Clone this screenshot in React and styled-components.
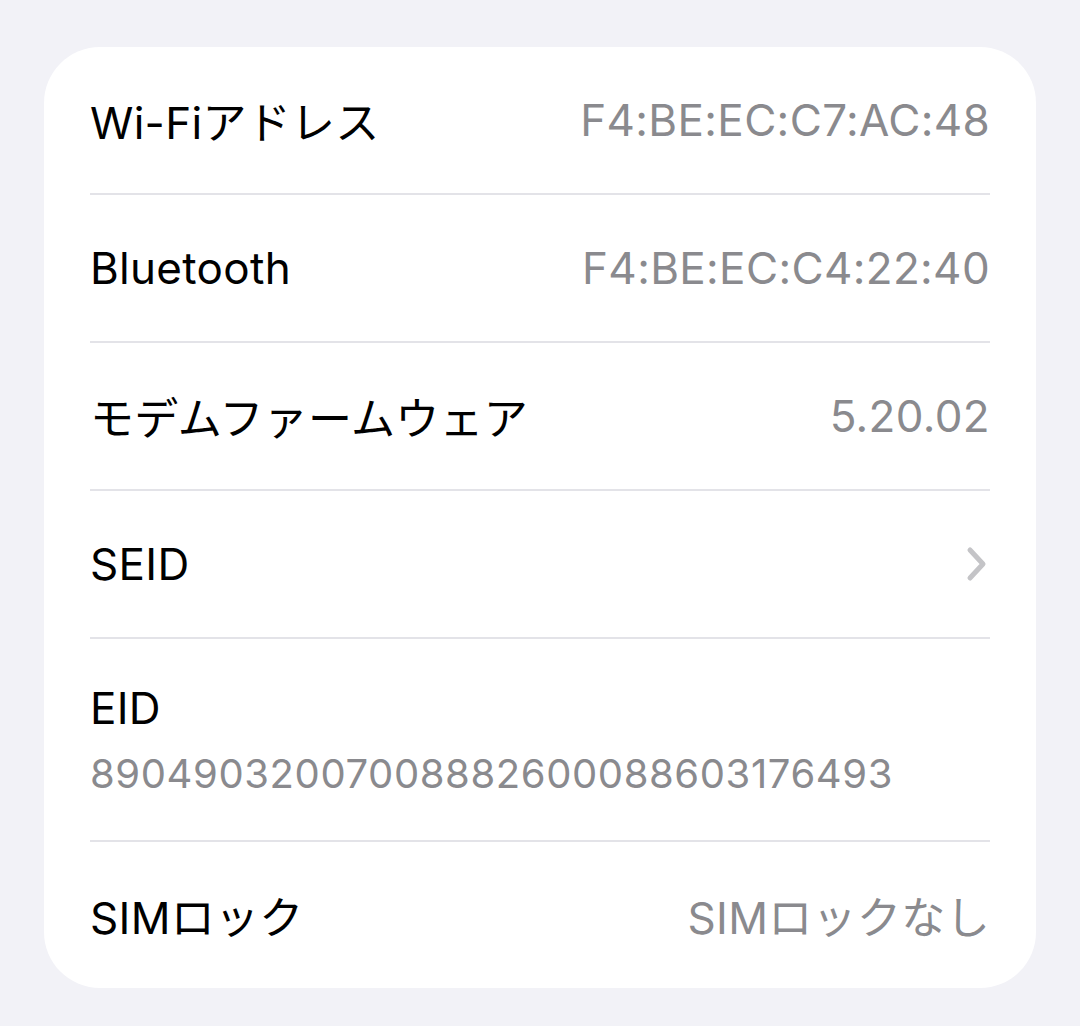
import React from 'react'
import styled, { createGlobalStyle } from 'styled-components'

const GlobalStyle = createGlobalStyle`
    html, body { margin:0; padding:0; background:#f2f2f7; }
    body { font-family: Inter, "Noto Sans CJK JP", sans-serif; -webkit-font-smoothing:antialiased; }
`

const Page = styled.div`
    width:1080px;
    height:1026px;
    box-sizing:border-box;
    padding:47px 44px 0 44px;
`

const Card = styled.div`
    background:#fff;
    border-radius:56px;
    padding:0 46px;
    display:flex;
    flex-direction:column;
`

const Row = styled.div`
    display:flex;
    height:${p => p.$tall ? 201 : 146}px;
    border-bottom:${p => p.$last ? 'none' : '2px solid #e3e3e8'};
    flex-direction:${p => p.$stacked ? 'column' : 'row'};
    align-items:${p => p.$stacked ? 'flex-start' : 'center'};
    justify-content:${p => p.$stacked ? 'center' : 'space-between'};
`

const Label = styled.span`
    font-size:44px;
    color:#000;
    letter-spacing:0.3px;
`

const Value = styled.span`
    font-size:44px;
    color:#8a8a8e;
    letter-spacing:0.35px;
`

const SubValue = styled.span`
    font-size:40px;
    color:#8a8a8e;
    margin-top:14px;
    letter-spacing:0.6px;
`

const Chevron = () => (
    <svg width="22" height="36" viewBox="0 0 22 36" style={{ marginRight: 2 }}>
        <path d="M4 4 L17 18 L4 32" fill="none" stroke="#c4c4c7" strokeWidth="5" strokeLinecap="round" strokeLinejoin="round" />
    </svg>
)

const rows = [
    { label: 'Wi-Fiアドレス', value: 'F4:BE:EC:C7:AC:48' },
    { label: 'Bluetooth', value: 'F4:BE:EC:C4:22:40' },
    { label: 'モデムファームウェア', value: '5.20.02' },
    { label: 'SEID', chevron: true },
]

function App() {
    return (
        <Page>
            <GlobalStyle />
            <Card>
                {rows.map(r => (
                    <Row key={r.label}>
                        <Label>{r.label}</Label>
                        {r.chevron ? <Chevron /> : <Value>{r.value}</Value>}
                    </Row>
                ))}
                <Row $tall $stacked>
                    <Label>EID</Label>
                    <SubValue>89049032007008882600088603176493</SubValue>
                </Row>
                <Row $last>
                    <Label>SIMロック</Label>
                    <Value>SIMロックなし</Value>
                </Row>
            </Card>
        </Page>
    )
}

export default App
